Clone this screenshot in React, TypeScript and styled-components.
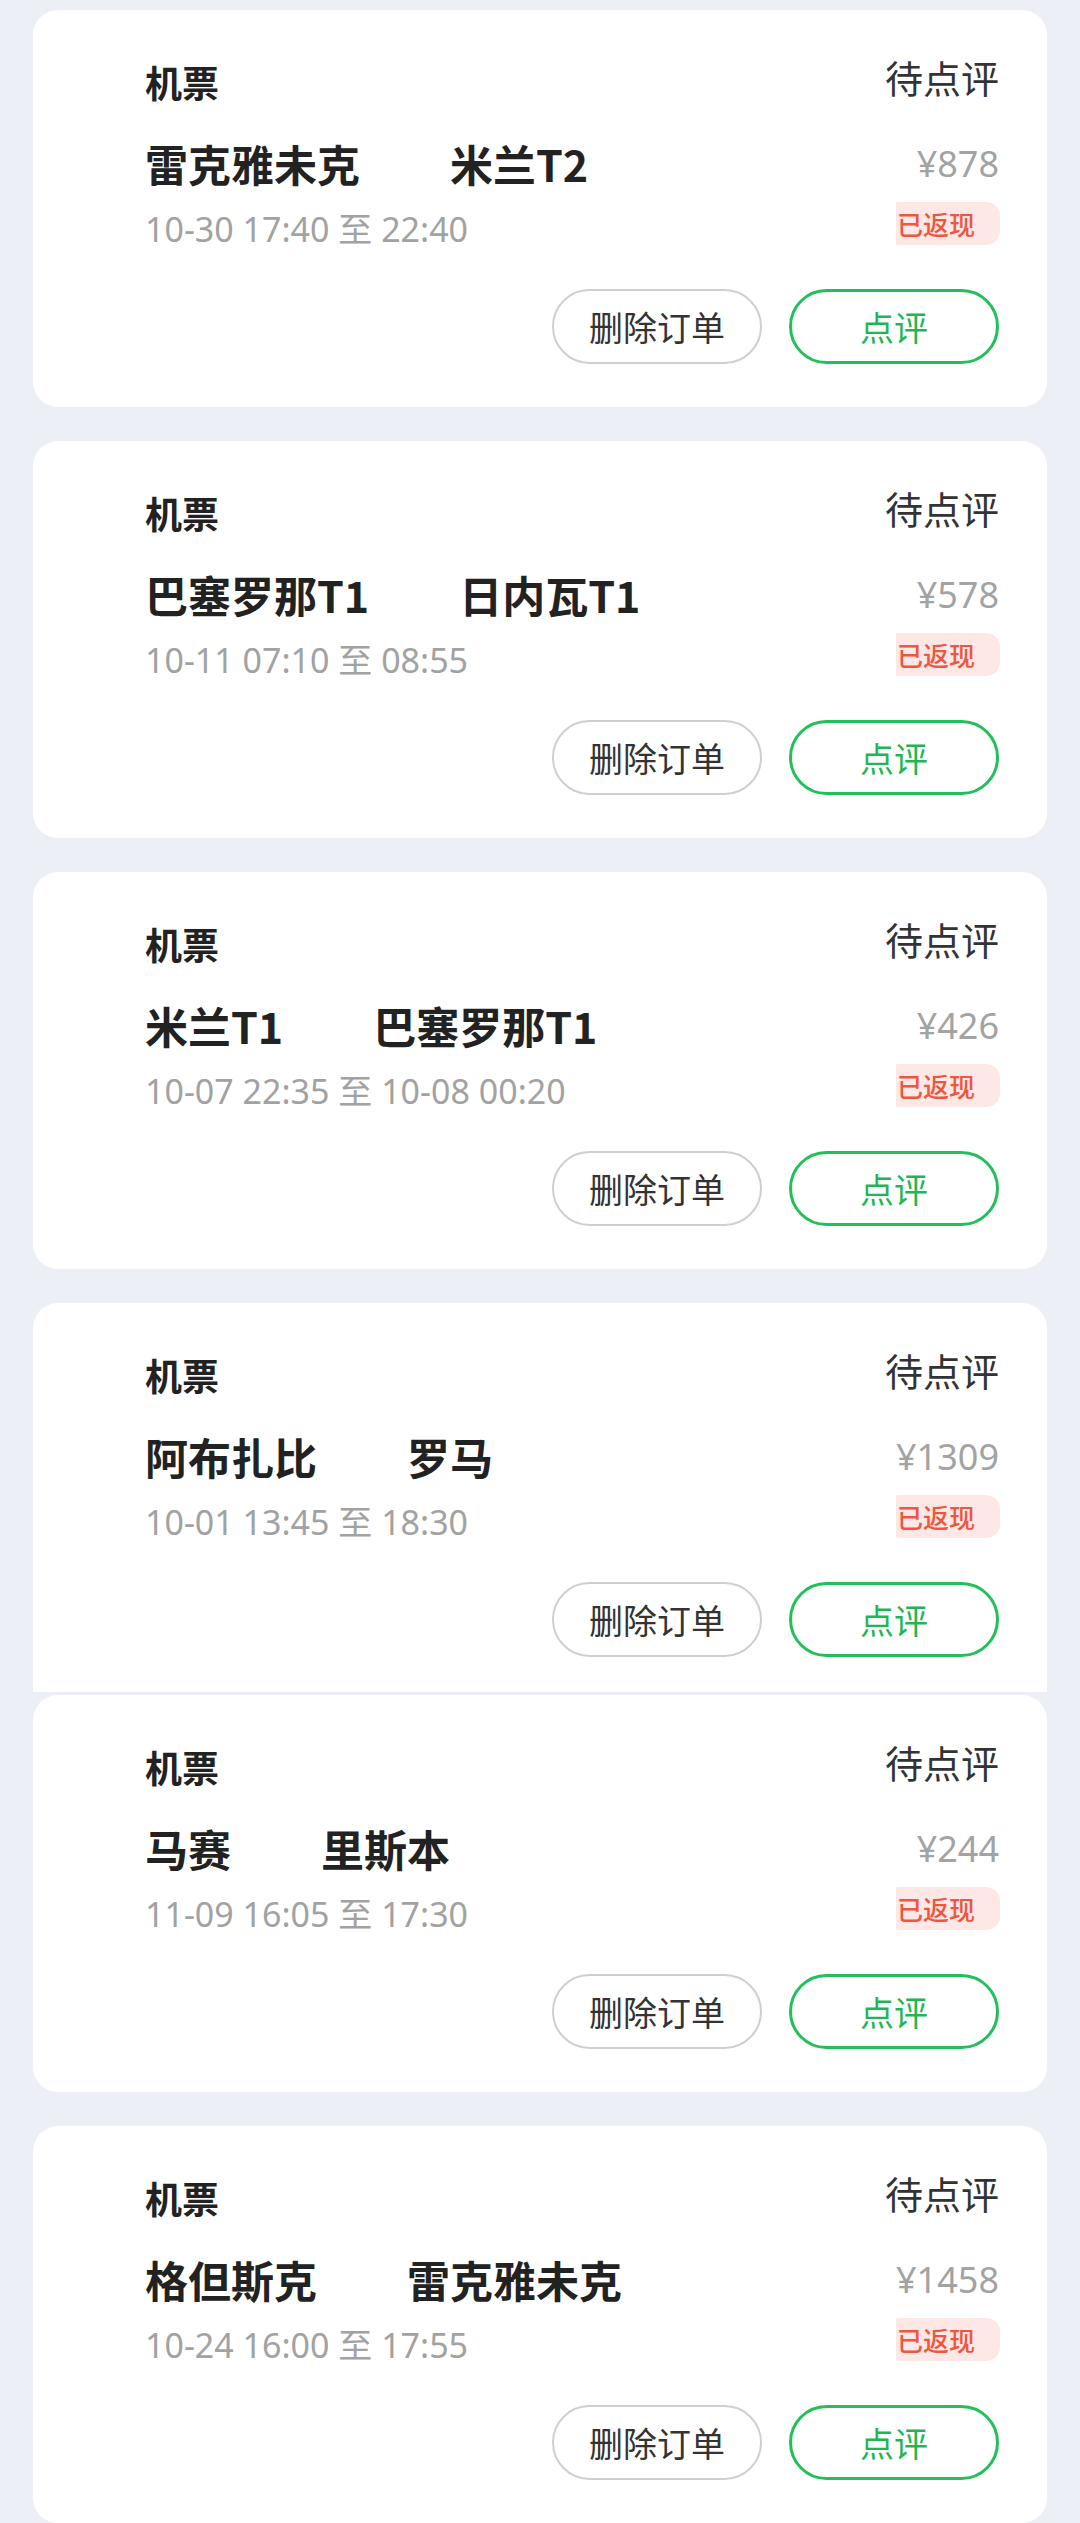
import React from "react";
import styled, { createGlobalStyle } from "styled-components";

const GlobalStyle = createGlobalStyle`
  html, body {
    margin: 0;
    padding: 0;
    background: #eceff5;
  }
  body {
    font-family: "Noto Sans", "Noto Sans CJK SC", sans-serif;
    -webkit-font-smoothing: antialiased;
  }
`;

const Page = styled.div`
  display: flex;
  flex-direction: column;
  padding: 10px 33px 0;
  background: #eceff5;
  min-height: 2523px;
  box-sizing: border-box;
`;

const Card = styled.div<{ $clipped?: boolean }>`
  box-sizing: border-box;
  background: #ffffff;
  border-radius: ${(p) => (p.$clipped ? "25px 25px 0 0" : "25px")};
  padding: 45px 48px 43px 112px;
  margin-bottom: ${(p) => (p.$clipped ? 3 : 34)}px;
  display: flex;
  flex-direction: column;
  height: ${(p) => (p.$clipped ? "389px" : "397px")};
  overflow: hidden;
  flex-shrink: 0;
`;

const Header = styled.div`
  display: flex;
  justify-content: space-between;
  align-items: flex-start;
  height: 44px;
`;

const Category = styled.span`
  font-family: "Noto Sans CJK SC", sans-serif;
  font-size: 37px;
  line-height: 44px;
  font-weight: 700;
  color: #222222;
  margin-top: 5px;
`;

const Status = styled.span`
  font-family: "Noto Sans CJK SC", sans-serif;
  font-size: 38px;
  line-height: 44px;
  font-weight: 400;
  color: #333333;
`;

const RouteRow = styled.div`
  display: flex;
  justify-content: space-between;
  align-items: center;
  margin-top: 38px;
  height: 52px;
`;

const Route = styled.div`
  display: flex;
  gap: 90px;
`;

const City = styled.span`
  font-family: "Noto Sans CJK SC", sans-serif;
  font-size: 43px;
  line-height: 52px;
  font-weight: 700;
  color: #222222;
`;

const Price = styled.span`
  font-family: "Noto Sans", "Noto Sans CJK SC", sans-serif;
  font-size: 36px;
  line-height: 52px;
  color: #a3a3a3;
  margin-top: 2px;
`;

const InfoRow = styled.div`
  display: flex;
  justify-content: space-between;
  align-items: flex-start;
  margin-top: 13px;
  height: 43px;
`;

const Time = styled.span`
  font-family: "Noto Sans", "Noto Sans CJK SC", sans-serif;
  font-size: 34px;
  line-height: 43px;
  padding-top: 6px;
  color: #a2a2a2;
`;

const Badge = styled.span`
  font-family: "Noto Sans CJK SC", sans-serif;
  font-size: 26px;
  line-height: 43px;
  height: 43px;
  font-weight: 500;
  color: #ef553f;
  background: #fde8e5;
  padding: 0 25px 0 1px;
  border-radius: 2px 14px 14px 2px;
  margin-right: -1px;
`;

const Actions = styled.div`
  display: flex;
  justify-content: flex-end;
  gap: 27px;
  margin-top: 44px;
`;

const PillButton = styled.button<{ $primary?: boolean }>`
  box-sizing: border-box;
  width: 210px;
  height: 75px;
  border-radius: 38px;
  background: #ffffff;
  border: ${(p) => (p.$primary ? "3px solid #22c05b" : "2px solid #cfcfcf")};
  color: ${(p) => (p.$primary ? "#1fb653" : "#333333")};
  font-family: "Noto Sans CJK SC", sans-serif;
  font-size: 34px;
  line-height: 1;
  padding: 0;
  display: flex;
  align-items: center;
  justify-content: center;
  cursor: pointer;
`;

type Order = {
  from: string;
  to: string;
  price: string;
  time: string;
  clipped?: boolean;
};

const orders: Order[] = [
  { from: "雷克雅未克", to: "米兰T2", price: "¥878", time: "10-30 17:40 至 22:40" },
  { from: "巴塞罗那T1", to: "日内瓦T1", price: "¥578", time: "10-11 07:10 至 08:55" },
  { from: "米兰T1", to: "巴塞罗那T1", price: "¥426", time: "10-07 22:35 至 10-08 00:20" },
  { from: "阿布扎比", to: "罗马", price: "¥1309", time: "10-01 13:45 至 18:30", clipped: true },
  { from: "马赛", to: "里斯本", price: "¥244", time: "11-09 16:05 至 17:30" },
  { from: "格但斯克", to: "雷克雅未克", price: "¥1458", time: "10-24 16:00 至 17:55" },
];

const OrderCard: React.FC<{ order: Order }> = ({ order }) => (
  <Card $clipped={order.clipped}>
    <Header>
      <Category>机票</Category>
      <Status>待点评</Status>
    </Header>
    <RouteRow>
      <Route>
        <City>{order.from}</City>
        <City>{order.to}</City>
      </Route>
      <Price>{order.price}</Price>
    </RouteRow>
    <InfoRow>
      <Time>{order.time}</Time>
      <Badge>已返现</Badge>
    </InfoRow>
    <Actions>
      <PillButton>删除订单</PillButton>
      <PillButton $primary>点评</PillButton>
    </Actions>
  </Card>
);

export default function App() {
  return (
    <>
      <GlobalStyle />
      <Page>
        {orders.map((o, i) => (
          <OrderCard key={i} order={o} />
        ))}
      </Page>
    </>
  );
}
